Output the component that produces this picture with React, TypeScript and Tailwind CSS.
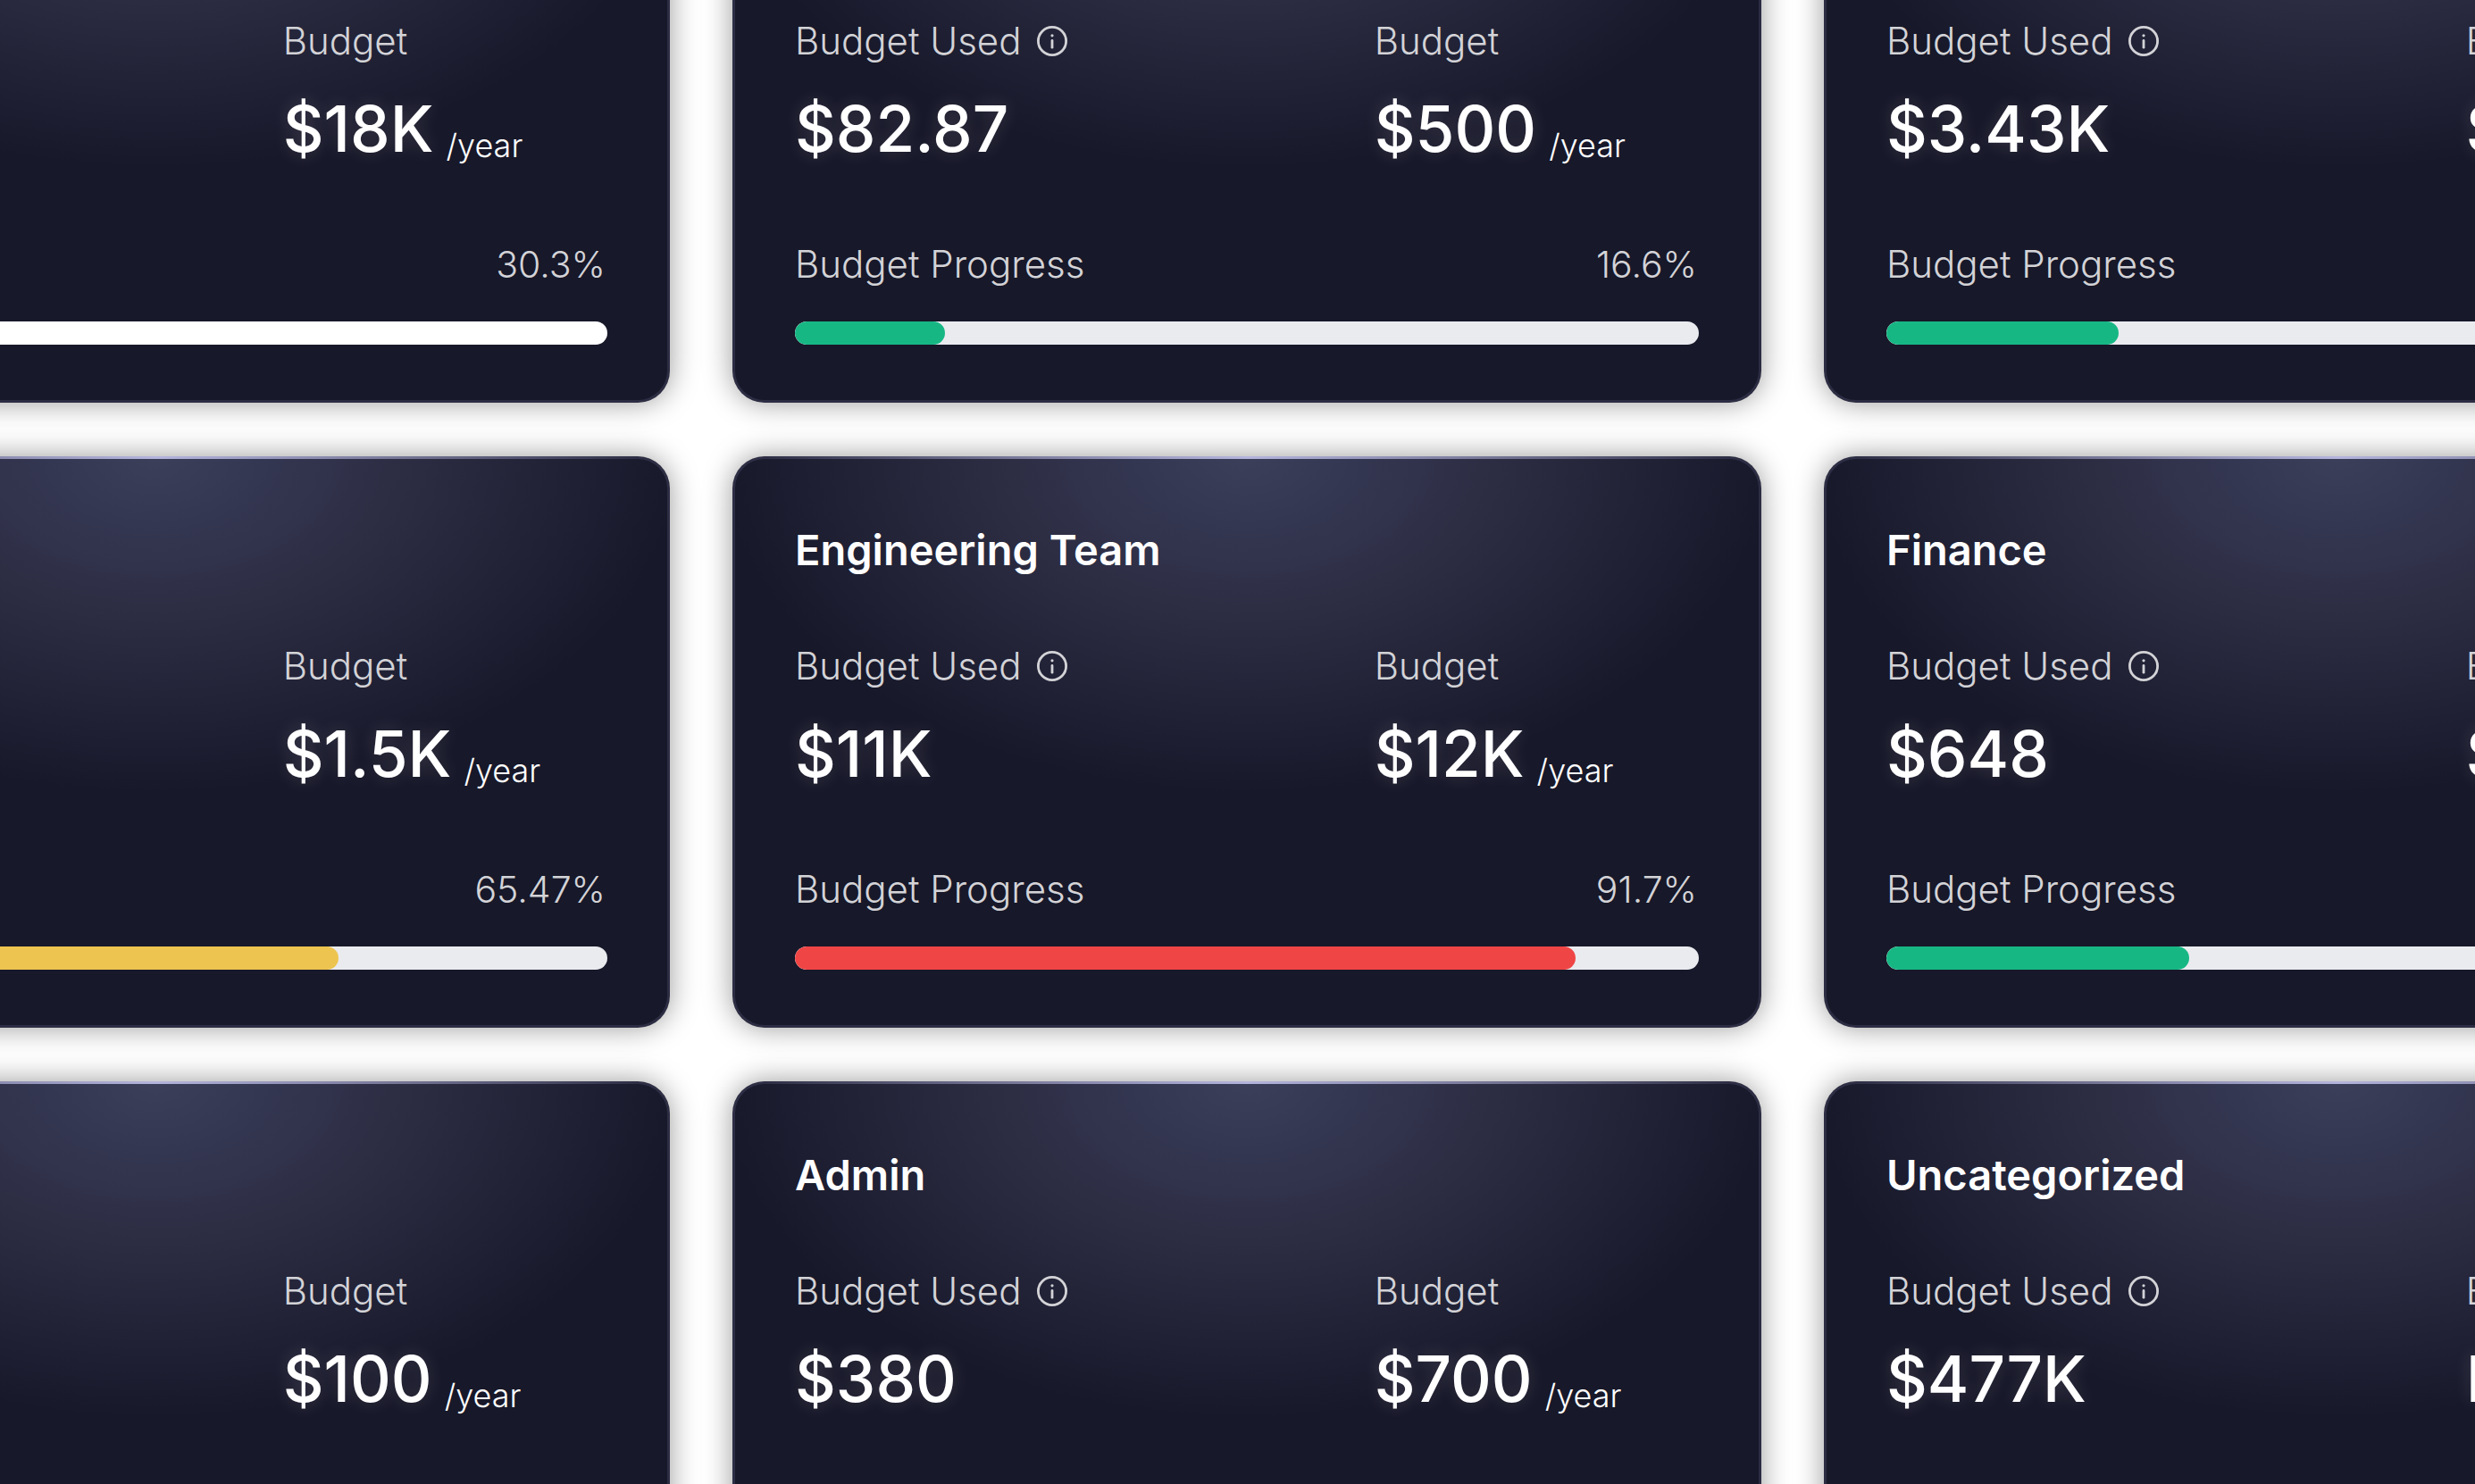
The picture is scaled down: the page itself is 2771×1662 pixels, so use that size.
type Tone = "green" | "amber" | "red" | "none";

interface Team {
  id: string;
  name?: string;
  used?: string;
  budget: string;
  period?: string;
  percent?: string;
  fill: number;
  tone: Tone;
}

const teams: Team[] = [
  { id: "a", budget: "$18K", period: "/year", percent: "30.3%", fill: 0, tone: "none" },
  { id: "b", used: "$82.87", budget: "$500", period: "/year", percent: "16.6%", fill: 16.6, tone: "green" },
  { id: "c", used: "$3.43K", budget: "$13K", fill: 25.7, tone: "green" },
  { id: "d", budget: "$1.5K", period: "/year", percent: "65.47%", fill: 70.3, tone: "amber" },
  { id: "e", name: "Engineering Team", used: "$11K", budget: "$12K", period: "/year", percent: "91.7%", fill: 86.4, tone: "red" },
  { id: "f", name: "Finance", used: "$648", budget: "$2K", fill: 33.5, tone: "green" },
  { id: "g", budget: "$100", period: "/year", fill: 20, tone: "green" },
  { id: "h", name: "Admin", used: "$380", budget: "$700", period: "/year", fill: 54, tone: "amber" },
  { id: "i", name: "Uncategorized", used: "$477K", budget: "None", fill: 0, tone: "none" },
];

const fillTone: Record<Tone, string> = {
  green: "bg-[#17b784]",
  amber: "bg-[#edc44f]",
  red: "bg-[#f04545]",
  none: "bg-white",
};

function InfoButton() {
  return (
    <button type="button" aria-label="About budget used" className="flex text-[#d3d3d7]">
      <svg viewBox="0 0 36 36" className="size-9" fill="none" stroke="currentColor" aria-hidden="true">
        <circle cx="18" cy="18" r="15.6" strokeWidth="2.8" />
        <path d="M18 17.4V25.2" strokeWidth="2.8" strokeLinecap="round" />
        <circle cx="18" cy="11.8" r="1.6" fill="currentColor" stroke="none" />
      </svg>
    </button>
  );
}

function Amount({ value, period }: { value: string; period?: string }) {
  return (
    <p className="flex items-end gap-3.5 whitespace-nowrap">
      <span className="text-[71px] leading-[88px] font-medium [text-shadow:0_0_20px_rgba(255,240,255,0.16)]">{value}</span>
      {period && <span className="text-[36px] leading-[50px] font-[350]">{period}</span>}
    </p>
  );
}

function BudgetCard({ team }: { team: Team }) {
  return (
    <article className="relative flex flex-col rounded-[36px] bg-[#171829] bg-[radial-gradient(51%_59%_at_50%_0%,#3b3f59_0%,#343852_18%,#32334d_30%,#2c2d42_48%,#202135_78%,#171829_100%)] px-[70px] pt-[77px] pb-[65px] text-white shadow-[0_0_32px_rgba(0,0,0,0.4),inset_0_0_0_3px_rgba(70,70,100,0.45)]">
      <div className="absolute inset-x-9 top-0 h-[3px] bg-linear-to-r from-transparent via-[#b4b4dc] to-transparent" />
      <h2 className="h-14 text-[47px] leading-14 font-semibold">{team.name}</h2>
      <div className="mt-[76px] grid grid-cols-[25fr_14fr]">
        <div className="flex flex-col gap-7">
          {team.used && (
            <>
              <div className="flex items-center gap-4 text-[42px] leading-[52px] font-[350] text-[#d3d3d7]">
                <span>Budget Used</span>
                <InfoButton />
              </div>
              <Amount value={team.used} />
            </>
          )}
        </div>
        <div className="flex min-w-0 flex-col gap-7">
          <span className="text-[42px] leading-[52px] font-[350] text-[#d3d3d7]">Budget</span>
          <Amount value={team.budget} period={team.period} />
        </div>
      </div>
      <div className="mt-[82px] flex h-[52px] justify-between pr-[2px] text-[42px] leading-[52px] font-[350] text-[#d3d3d7]">
        <span>{team.used && "Budget Progress"}</span>
        <span className="text-[41px]">{team.percent}</span>
      </div>
      <div
        role="progressbar"
        aria-label="Budget Progress"
        aria-valuenow={team.fill}
        className={`mt-[38px] h-[26px] overflow-hidden rounded-full ${team.tone === "none" ? "bg-white" : "bg-[#eaebef]"}`}
      >
        <div className={`h-full rounded-full ${fillTone[team.tone]}`} style={{ width: `${team.fill}%` }} />
      </div>
    </article>
  );
}

export default function App() {
  return (
    <main className="h-screen overflow-hidden bg-white font-[Inter,sans-serif]">
      <div className="-mt-[189px] -mr-[423px] -ml-[402px] grid grid-cols-3 gap-x-[70px] gap-y-[60px]">
        {teams.map((team) => (
          <BudgetCard key={team.id} team={team} />
        ))}
      </div>
    </main>
  );
}
